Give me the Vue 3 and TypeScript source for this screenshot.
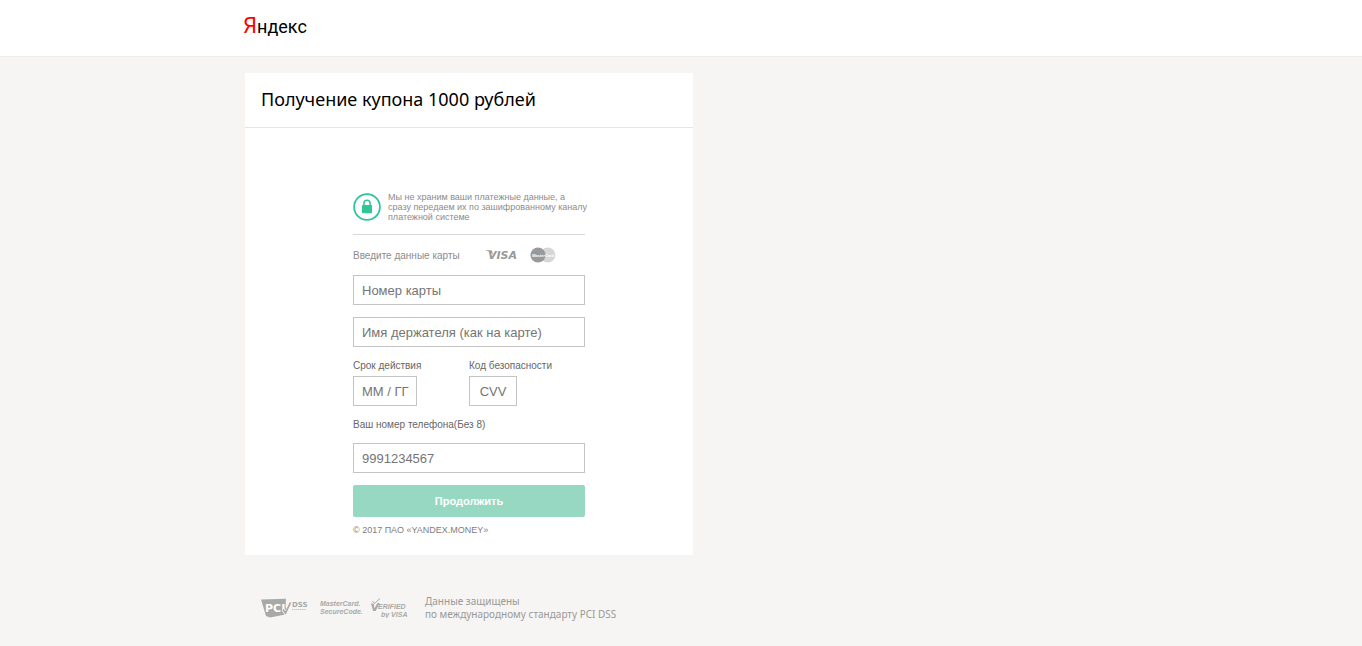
<script setup lang="ts">
import { ref } from 'vue'

const cardNumber = ref('')
const holder = ref('')
const expiry = ref('')
const cvv = ref('')
const phone = ref('')
</script>

<template>
  <div class="page">
    <header class="top">
      <div class="wrap">
        <a class="logo" href="#"><span class="logo-first">Я</span>ндекс</a>
      </div>
    </header>

    <main class="wrap main">
      <section class="card">
        <h1 class="title">Получение купона 1000 рублей</h1>

        <form class="form" @submit.prevent>
          <div class="secure">
            <svg class="lock" viewBox="0 0 28 28" width="28" height="28" aria-hidden="true">
              <circle cx="14" cy="14" r="12.9" fill="none" stroke="#2fc596" stroke-width="1.8" />
              <rect x="9" y="12" width="10" height="8.2" rx="0.8" fill="#2fc596" />
              <path d="M10.9 12.5V10.4a3.1 3.1 0 0 1 6.2 0v2.1" fill="none" stroke="#2fc596" stroke-width="1.5" />
            </svg>
            <p class="secure-text">Мы не храним ваши платежные данные, а<br />сразу передаем их по зашифрованному каналу<br />платежной системе</p>
          </div>

          <div class="brands">
            <span class="brands-label">Введите данные карты</span>
            <svg class="visa" viewBox="0 0 34 12" width="34" height="12" role="img" aria-label="VISA">
              <text x="2" y="10" class="visa-text">VISA</text>
              <path d="M0 1.2h4.6q1.3 0 1.6 1.3L7 6Q4.800 2.600 0 1.800z" fill="#999" />
            </svg>
            <svg class="mc" viewBox="0 0 26 16" width="26" height="16" role="img" aria-label="MasterCard">
              <circle cx="17.800" cy="8" r="7.6" fill="#d6d6d6" />
              <circle cx="8" cy="8" r="7.6" fill="#999" />
              <text x="13" y="9.500" text-anchor="middle" class="mc-text">MasterCard</text>
            </svg>
          </div>

          <input v-model="cardNumber" class="field" type="text" aria-label="Номер карты" placeholder="Номер карты" autocomplete="off" />
          <input v-model="holder" class="field" type="text" aria-label="Имя держателя" placeholder="Имя держателя (как на карте)" autocomplete="off" />

          <div class="pair">
            <div class="cell">
              <label class="label" for="expiry">Срок действия</label>
              <input id="expiry" v-model="expiry" class="field expiry" type="text" placeholder="ММ / ГГ" autocomplete="off" />
            </div>
            <div class="cell">
              <label class="label" for="cvv">Код безопасности</label>
              <input id="cvv" v-model="cvv" class="field cvv" type="text" placeholder="CVV" autocomplete="off" />
            </div>
          </div>

          <label class="label" for="phone">Ваш номер телефона(Без 8)</label>
          <input id="phone" v-model="phone" class="field phone" type="tel" placeholder="9991234567" autocomplete="off" />

          <button class="submit" type="submit">Продолжить</button>
          <p class="copy">© 2017 ПАО «YANDEX.MONEY»</p>
        </form>
      </section>

      <footer class="footer">
        <svg class="pci" viewBox="0 0 48 20" width="48" height="20" role="img" aria-label="PCI DSS">
          <path d="M0 1.500L25 .8 24.500 9l2 3-2 4.500L9 19.500 5 18z" fill="#a9a9a7" />
          <text x="4" y="14" class="pci-text">PCI</text>
          <path d="M22 11l2.500 4.500L30 5" fill="none" stroke="#f6f5f3" stroke-width="3" />
          <path d="M22 11.500l2.500 3.500L29.500 4.500" fill="none" stroke="#a9a9a7" stroke-width="1.700" />
          <text x="31" y="9" class="dss-text">DSS</text>
          <path d="M31 11.500h14" stroke="#c4c4c2" stroke-width="1" stroke-dasharray="1.4 .5" />
        </svg>
        <svg class="secure-code" viewBox="0 0 44 18" width="44" height="18" role="img" aria-label="MasterCard SecureCode">
          <text x="0" y="7" class="mark-text">MasterCard.</text>
          <text x="0" y="15" class="mark-text">SecureCode.</text>
        </svg>
        <svg class="verified" viewBox="0 0 38 20" width="38" height="20" role="img" aria-label="Verified by VISA">
          <path d="M1.500 3l2 2.500L9 .5" fill="none" stroke="#a9a9a7" stroke-width="1" />
          <path d="M0 5.500h2.600l.9 5L6.500 5H8.800L4.600 13H2.200z" fill="#a9a9a7" />
          <text x="7" y="11" class="mark-text">ERIFIED</text>
          <text x="10" y="19" class="mark-text">by VISA</text>
        </svg>
        <p class="footer-text">Данные защищены<br />по международному стандарту PCI DSS</p>
      </footer>
    </main>
  </div>
</template>

<style>
body {
  margin: 0;
  background: #f6f5f3;
}
</style>

<style scoped>
.page {
  min-height: 100vh;
  background: #f6f5f3;
  font-family: "Liberation Sans", Arial, sans-serif;
}
.wrap {
  box-sizing: border-box;
  max-width: 872px;
  margin: 0 auto;
}
.top {
  background: #fff;
  border-bottom: 1px solid #ececea;
}
.top .wrap {
  display: flex;
  height: 56px;
  box-sizing: border-box;
  padding-bottom: 4px;
  align-items: center;
}
.logo {
  margin-left: -2px;
  font-family: Roboto, sans-serif;
  font-size: 18px;
  line-height: 28px;
  color: #000;
  text-decoration: none;
}
.logo-first {
  font-size: 22px;
  color: #f00;
}
.main {
  padding-top: 16px;
}
.card {
  max-width: 448px;
  background: #fff;
}
.title {
  margin: 0;
  padding: 12px 16px 14px;
  border-bottom: 1px solid #e4e4e4;
  font: 400 18px/28px "Noto Sans", sans-serif;
  color: #000;
}
.form {
  display: flex;
  flex-direction: column;
  max-width: 232px;
  margin: 0 auto;
  padding: 64px 0 19px;
}
.secure {
  display: flex;
  gap: 7px;
  align-items: center;
  padding-bottom: 12px;
  border-bottom: 1px solid #d9d9d9;
}
.lock {
  flex: none;
}
.secure-text {
  margin: 0;
  font-size: 9px;
  line-height: 10px;
  white-space: nowrap;
  color: #8c8c8c;
}
.brands {
  display: flex;
  height: 40px;
  align-items: center;
}
.brands-label {
  flex: none;
  margin-right: 26px;
  font-size: 10px;
  color: #8c8c8c;
}
.visa {
  margin-right: 10px;
}
.visa-text {
  font: italic 700 11px "DejaVu Sans", sans-serif;
  fill: #999;
}
.mc-text {
  font: italic 700 4px "Liberation Sans", sans-serif;
  fill: #fff;
}
.field {
  box-sizing: border-box;
  width: 100%;
  height: 30px;
  margin: 0 0 12px;
  padding: 0 8px;
  border: 1px solid #c4c4c4;
  border-radius: 0;
  background: #fff;
  font: 13px "Liberation Sans", Arial, sans-serif;
  color: #333;
  outline: none;
}
.field::placeholder {
  color: #757575;
  opacity: 1;
}
.field:focus {
  border-color: #2fc596;
}
.pair {
  display: grid;
  grid-template-columns: 1fr 1fr;
}
.cell {
  display: flex;
  flex-direction: column;
}
.label {
  padding: 1px 0 4px;
  font-size: 10px;
  line-height: 12px;
  color: #666;
}
.field.expiry {
  width: 64px;
  padding-right: 0;
}
.field.cvv {
  width: 48px;
  padding: 0;
  text-align: center;
}
.field.phone {
  margin-top: 8px;
}
.submit {
  height: 32px;
  padding: 0;
  border: 0;
  border-radius: 2px;
  background: #96d8c1;
  font: 700 11px "Liberation Sans", Arial, sans-serif;
  color: #fff;
  cursor: pointer;
}
.copy {
  margin: 7px 0 0;
  font-size: 9px;
  line-height: 12px;
  color: #808080;
}
.footer {
  display: flex;
  align-items: center;
  padding: 40px 16px 24px;
}
.pci {
  margin-right: 11px;
}
.secure-code {
  margin-right: 7px;
}
.verified {
  margin-right: 16px;
}
.pci-text {
  font: 700 11px "DejaVu Sans", sans-serif;
  fill: #fff;
}
.dss-text {
  font: 700 7px "DejaVu Sans", sans-serif;
  fill: #a9a9a7;
}
.mark-text {
  font: italic 700 7px "Liberation Sans", sans-serif;
  fill: #a9a9a7;
}
.footer-text {
  margin: 0;
  font: 10px/13px "Noto Sans", sans-serif;
  color: #999;
}
</style>
